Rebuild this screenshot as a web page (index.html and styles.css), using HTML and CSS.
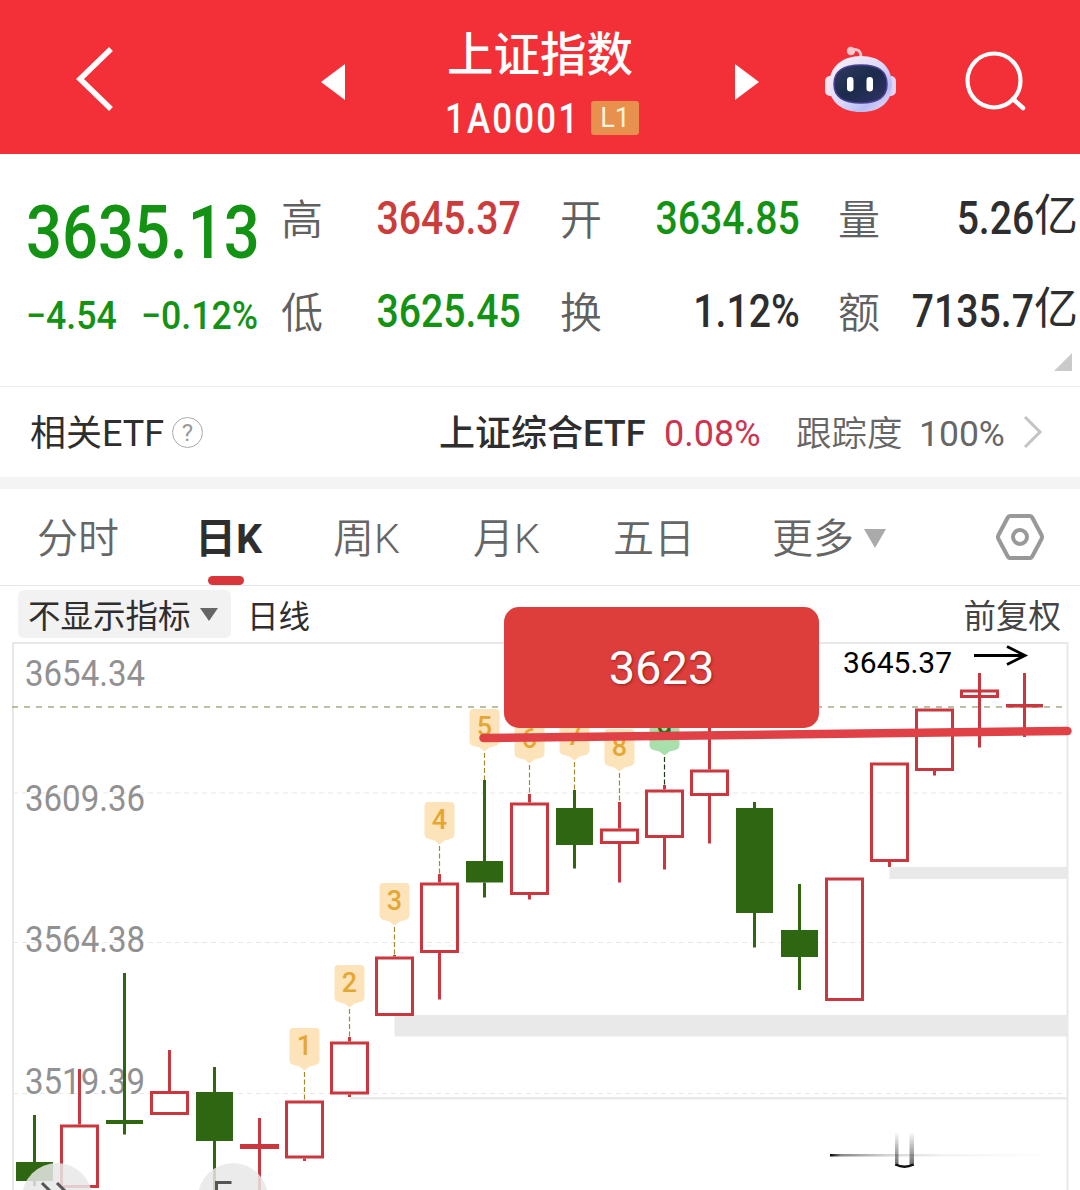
FILE: index.html
```html
<!DOCTYPE html>
<html lang="zh-CN">
  <head>
    <meta charset="UTF-8" />
    <meta name="viewport" content="width=device-width, initial-scale=1.0" />
    <title>上证指数</title>
    <link rel="stylesheet" href="styles.css">
  </head>
  <body>
    <div class="header">
      <svg class="back" width="40" height="68" viewBox="0 0 40 68"><path d="M36 4 L5 34 L36 64" fill="none" stroke="#fff" stroke-width="5.500" /></svg>
      <svg class="prev" width="24" height="36" viewBox="0 0 24 36"><path d="M24 0 L0 18 L24 36 Z" fill="#fff" /></svg>
      <div class="name">
        <div class="title">上证指数</div>
        <div class="code"><span class="code-num">1A0001</span><span class="level">L1</span></div>
      </div>
      <svg class="next" width="24" height="36" viewBox="0 0 24 36"><path d="M0 0 L24 18 L0 36 Z" fill="#fff" /></svg>
      <svg class="robot" width="72" height="68" viewBox="0 0 72 68">
        <defs>
          <linearGradient id="head" x1="0" y1="0" x2="1" y2="1">
            <stop offset="0" stop-color="#fff3f6" />
            <stop offset="0.5" stop-color="#dcd9fa" />
            <stop offset="0.75" stop-color="#b9bdf5" />
            <stop offset="1" stop-color="#f9dff0" />
          </linearGradient>
          <linearGradient id="face" x1="0" y1="0" x2="1" y2="1">
            <stop offset="0" stop-color="#303a61" />
            <stop offset="0.5" stop-color="#1b2b4b" />
            <stop offset="1" stop-color="#303365" />
          </linearGradient>
        </defs>
        <path d="M26 5 C33 3 36 6 36 13" fill="none" stroke="#ffc4cc" stroke-width="3" />
        <circle cx="26" cy="6" r="4.2" fill="#ffc9ce" />
        <rect x="0" y="31" width="12" height="20" rx="5" fill="#fbe3ef" />
        <rect x="60" y="31" width="11" height="20" rx="5" fill="#e3d4f4" />
        <path d="M36 11 C55 11 67 22 67 40 C67 57 55 67 36 67 C17 67 4 57 4 40 C4 22 17 11 36 11 Z" fill="url(#head)" />
        <path d="M36 20 C53 20 62 26 62 39 C62 52 53 58 36 58 C18 58 9 52 9 39 C9 26 18 20 36 20 Z" fill="url(#face)" stroke="#4a3f94" stroke-width="1.5" />
        <rect x="22" y="32" width="6.5" height="14.500" rx="3.200" fill="#fff" />
        <rect x="41.500" y="32" width="6.5" height="14.500" rx="3.200" fill="#fff" />
      </svg>
      <svg class="search" width="64" height="62" viewBox="0 0 64 62">
        <ellipse cx="29" cy="30.500" rx="26.500" ry="27" fill="none" stroke="#fff" stroke-width="4.200" />
        <path d="M48 49 L58 58" stroke="#fff" stroke-width="4.500" stroke-linecap="round" />
      </svg>
    </div>

    <div class="quote">
      <div class="price">
        <div class="now green"><span class="num">3635.13</span></div>
        <div class="change green"><span class="num">−4.54</span><span class="num">−0.12%</span></div>
      </div>
      <div class="grid">
        <span class="label">高</span><span class="val red"><span class="num">3645.37</span></span>
        <span class="label">开</span><span class="val green"><span class="num">3634.85</span></span>
        <span class="label">量</span><span class="val"><span class="num">5.26</span><span class="unit">亿</span></span>
        <span class="label">低</span><span class="val green"><span class="num">3625.45</span></span>
        <span class="label">换</span><span class="val"><span class="num">1.12%</span></span>
        <span class="label">额</span><span class="val"><span class="num">7135.7</span><span class="unit">亿</span></span>
      </div>
      <div class="corner"></div>
    </div>

    <div class="etf">
      <span class="etf-title">相关ETF</span>
      <span class="help">?</span>
      <span class="etf-name">上证综合ETF</span>
      <span class="etf-rate">0.08%</span>
      <span class="track">跟踪度</span>
      <span class="track-num">100%</span>
      <svg class="more" width="20" height="34" viewBox="0 0 20 34"><path d="M2 2 L17 17 L2 32" fill="none" stroke="#c4c4c4" stroke-width="3" /></svg>
    </div>

    <div class="tabs">
      <span class="tab">分时</span>
      <span class="tab active">日K</span>
      <span class="tab">周K</span>
      <span class="tab">月K</span>
      <span class="tab">五日</span>
      <span class="tab">更多<i class="down"></i></span>
      <svg class="setting" width="50" height="48" viewBox="0 0 50 48">
        <path d="M15.500 3 H34.500 Q36.500 3 37.500 5 L46.500 22 Q47.500 24 46.500 26 L37.500 43 Q36.500 45 34.500 45 H15.500 Q13.500 45 12.500 43 L3.500 26 Q2.500 24 3.500 22 L12.500 5 Q13.500 3 15.500 3 Z" fill="none" stroke="#999" stroke-width="4" />
        <circle cx="25" cy="24" r="7" fill="none" stroke="#999" stroke-width="4" />
      </svg>
    </div>

    <div class="tools">
      <span class="select">不显示指标<i class="down small"></i></span>
      <span class="period">日线</span>
      <span class="adjust">前复权</span>
    </div>

    <div class="chart">
      <svg id="kline" width="1080" height="548" viewBox="0 642 1080 548">
        <defs>
          <linearGradient id="fadeLine" x1="0" x2="1">
            <stop offset="0" stop-color="#000" />
            <stop offset="0.05" stop-color="#888" />
            <stop offset="0.25" stop-color="#d4d4d4" />
            <stop offset="0.5" stop-color="#f2f2f2" />
            <stop offset="1" stop-color="#fff" />
          </linearGradient>
          <linearGradient id="fadeUp" x1="0" y1="0" x2="0" y2="1">
            <stop offset="0" stop-color="#333" stop-opacity="0" />
            <stop offset="1" stop-color="#333" stop-opacity="0.75" />
          </linearGradient>
        </defs>
        <g fill="none" stroke="#e8e8e8" stroke-width="2">
          <path d="M13 1190 V643 H1067.500 V1190" />
          <path d="M13 793 H1067 M13 942.500 H1067 M13 1093.500 H1067" stroke-width="1.200" stroke-dasharray="5 4" />
        </g>
        <g class="axis">
          <text x="25" y="686" textLength="120" lengthAdjust="spacingAndGlyphs">3654.34</text>
          <text x="25" y="811" textLength="120" lengthAdjust="spacingAndGlyphs">3609.36</text>
          <text x="25" y="952" textLength="120" lengthAdjust="spacingAndGlyphs">3564.38</text>
          <text x="25" y="1094" textLength="120" lengthAdjust="spacingAndGlyphs">3519.39</text>
        </g>
        <path d="M12 707 H1064" stroke="#a3ad84" stroke-width="1.600" stroke-dasharray="6 6" />
        <g fill="#e9e9e9">
          <rect x="394.500" y="1015" width="673" height="21.500" />
          <rect x="889.500" y="867" width="178" height="12" />
          <rect x="349.500" y="1097" width="718" height="2.500" />
        </g>
        <g id="candles"></g>
        <g id="tags"></g>
        <text class="high" x="843" y="673">3645.37</text>
        <path d="M974 655.500 H1024 M1007 646.500 L1025 655.500 L1007 664.500" fill="none" stroke="#000" stroke-width="2.800" />
        <path d="M483.500 738 L1067.500 731" stroke="#e04147" stroke-width="8.500" stroke-linecap="round" />

        <!-- 滑块 -->
        <rect x="830" y="1154" width="225" height="2.500" fill="url(#fadeLine)" />
        <rect x="895" y="1132" width="3.500" height="34" fill="url(#fadeUp)" />
        <rect x="909.500" y="1132" width="4.500" height="34" fill="url(#fadeUp)" />
        <path d="M895.500 1164.500 Q904.500 1169 913.500 1164.500" fill="none" stroke="#111" stroke-width="2.500" />

        <!-- 底部按钮 -->
        <g fill="#e8e8e8" fill-opacity="0.85">
          <circle cx="57" cy="1198" r="35" />
          <circle cx="233" cy="1198" r="35" />
        </g>
        <g fill="none" stroke="#555" stroke-width="3">
          <path d="M42 1183 L54 1195 M57 1183 L69 1195" />
          <path d="M231.500 1182.500 H216.500 V1192" />
        </g>
      </svg>
      <div class="note">3623</div>
    </div>

    <script>
      // [中心x, 最高, 实体上, 实体下, 最低, 1涨 0跌]
      const data = [
        [34.5, 1115, 1162, 1181, 1186, 0],
        [79.5, 1069, 1124.5, 1188, 1188, 1],
        [124.5, 973, 1120, 1124, 1134.5, 0],
        [169.5, 1050, 1091, 1115, 1115, 1],
        [214.5, 1067, 1092, 1141, 1190, 0],
        [259.5, 1118, 1144, 1149, 1190, 1],
        [304.5, 1100.5, 1100.5, 1158.5, 1161, 1],
        [349.5, 1037, 1041.5, 1094.5, 1097, 1],
        [394.5, 955, 956.5, 1016, 1016, 1],
        [439.5, 874, 882.5, 953, 999.5, 1],
        [484.5, 780, 861, 882.5, 897.5, 0],
        [529.5, 794, 802.5, 895, 899.5, 1],
        [574.5, 790, 808, 845, 868.5, 0],
        [619.5, 802, 828.5, 844, 882.5, 1],
        [664.5, 785, 789.5, 838, 869.5, 1],
        [709.5, 727, 769.5, 796, 843.5, 1],
        [754.5, 802, 808, 913, 947.5, 0],
        [799.5, 884, 930, 957, 990, 0],
        [844.5, 877.5, 877.5, 1001, 1001, 1],
        [889.5, 762.5, 762.5, 862, 867, 1],
        [934.5, 708.5, 708.5, 771, 775.5, 1],
        [979.5, 673, 689.5, 698, 747.5, 1],
        [1024.5, 673, 704, 707.5, 737, 1]
      ];
      let html = '';
      data.forEach(([x, high, top, bottom, low, up]) => {
        const color = up ? '#c9383f' : '#2f6612';
        const wick = (a, b) => (b > a ? `<rect x="${x - 1.5}" y="${a}" width="3" height="${b - a}" fill="${color}" />` : '');
        // 实体很薄时影线直接贯穿
        html += bottom - top < 10 ? wick(high, low) : wick(high, top) + wick(bottom, low);
        if (up && bottom - top > 6) {
          html += `<rect x="${x - 18}" y="${top + 1.5}" width="36" height="${bottom - top - 3}" fill="none" stroke="${color}" stroke-width="3" />`;
        } else {
          const w = bottom - top > 4.5 && up ? 39 : 37;
          html += `<rect x="${x - w / 2}" y="${top}" width="${w}" height="${bottom - top}" fill="${color}" />`;
        }
      });
      document.getElementById('candles').innerHTML = html;

      // 九转序列 [数字, 中心x, 标签顶部, 连线底部]
      const tags = [
        [1, 304.5, 1028, 1100],
        [2, 349.5, 965, 1037],
        [3, 394.5, 883, 955],
        [4, 439.5, 802, 874],
        [5, 484.5, 709, 780],
        [6, 529.5, 721, 794],
        [7, 574.5, 718, 790],
        [8, 619.5, 729, 802],
        [9, 664.5, 713, 785]
      ];
      html = '';
      tags.forEach(([n, x, y, end]) => {
        const last = n === 9;
        html += `<path d="M${x - 11} ${y} h22 q4 0 4 4 v28 q0 4 -4 5 l-6 1.500 l-5 4 l-5 -4 l-6 -1.500 q-4 -1 -4 -5 v-28 q0 -4 4 -4 z" fill="${last ? '#a9dfaa' : '#fde3ba'}" />`;
        html += `<path d="M${x} ${y + 44} V${end}" stroke="${last ? '#1d3d10' : '#a08a30'}" stroke-width="1.2" stroke-dasharray="5 2.5" />`;
        html += `<text class="tag" x="${x}" y="${y + 27}" fill="${last ? '#2f6612' : '#e5a733'}">${n}</text>`;
      });
      document.getElementById('tags').innerHTML = html;
    </script>
  </body>
</html>
```
FILE: styles.css
```css
body {
  margin: 0;
  width: 1080px;
  height: 1190px;
  overflow: hidden;
  background: #fff;
  color: #2e2e2e;
  font-family: Roboto, "Noto Sans CJK SC", sans-serif;
}
svg {
  display: block;
  flex: none;
}
.header {
  display: flex;
  height: 154px;
  background: #f32f38;
  color: #fff;
}
.back {
  margin: 45px 0 0 75px;
}
.prev {
  margin: 64px 0 0 206px;
}
.name {
  width: 194px;
  margin-left: 100px;
  flex: none;
}
.title {
  margin: 22px 0 0 2px;
  font-size: 46.5px;
  line-height: 66px;
  font-weight: 500;
  white-space: nowrap;
}
.code {
  display: flex;
  align-items: center;
  height: 34px;
  margin-top: 13px;
}
.code-num {
  width: 146px;
  margin-top: 2px;
  font-size: 42px;
  font-weight: 500;
  line-height: 34px;
  letter-spacing: 2.6px;
  transform: scaleX(0.83);
  transform-origin: left;
}
.level {
  width: 48px;
  height: 34px;
  border-radius: 3px;
  background: #e8904e;
  color: #fff3d8;
  font-size: 27px;
  line-height: 35px;
  text-align: center;
}
.next {
  margin: 64px 0 0 96px;
}
.robot {
  margin: 45px 0 0 66px;
}
.search {
  margin: 50px 0 0 68px;
}
.quote {
  position: relative;
  display: flex;
  height: 232px;
  border-bottom: 1px solid #ececec;
}
.green {
  color: #149214;
}
.red {
  color: #cb3c3c;
}
.num {
  display: inline-block;
  transform: scaleX(0.86);
  transform-origin: right;
}
.price {
  width: 281px;
  font-weight: 500;
}
.price .num {
  transform: scaleX(0.845);
  transform-origin: left;
}
.now {
  height: 82px;
  margin: 37px 0 0 26px;
  font-size: 75px;
  line-height: 82px;
}
.change {
  display: flex;
  gap: 9px;
  margin: 20px 0 0 26px;
  font-size: 39px;
  line-height: 46px;
}
.change .num {
  transform: scaleX(0.915);
}
.change .num:first-child {
  width: 106px;
}
.grid {
  display: grid;
  grid-template-columns: 42px 198px 81px 198px 80px 198px;
  grid-template-rows: 93px 93px;
  height: 186px;
  margin-top: 18px;
  align-items: center;
}
.label {
  margin-bottom: 5px;
  color: #606060;
  font-size: 42px;
  font-weight: 350;
  text-align: right;
}
.label:nth-child(6n + 1) {
  text-align: left;
}
.val {
  display: flex;
  align-items: center;
  justify-content: flex-end;
  font-size: 45.5px;
  font-weight: 500;
  line-height: 54px;
  white-space: nowrap;
}
.unit {
  margin-top: -6px;
  font-size: 44px;
  font-weight: 400;
}
.corner {
  position: absolute;
  right: 8px;
  bottom: 15px;
  border-left: 18px solid transparent;
  border-bottom: 18px solid #cacaca;
}
.etf {
  display: flex;
  align-items: center;
  height: 90px;
  padding-left: 30px;
  border-bottom: 12px solid #f4f4f4;
  font-size: 36px;
  white-space: nowrap;
}
.etf-title {
  width: 142px;
  margin-bottom: 4px;
}
.help {
  width: 29px;
  height: 29px;
  border: 1.5px solid #aaa;
  border-radius: 50%;
  color: #999;
  font-size: 24px;
  line-height: 30px;
  text-align: center;
}
.etf-name {
  width: 225px;
  margin: 0 0 4px 236px;
  font-weight: 500;
}
.etf-rate {
  width: 132px;
  margin-top: 4px;
  color: #cc3450;
}
.track {
  width: 123px;
  margin-bottom: 4px;
  color: #666;
  font-size: 35.5px;
  font-weight: 350;
}
.track-num {
  width: 104px;
  margin-top: 4px;
  color: #666;
  font-size: 35.5px;
}
.tabs {
  display: flex;
  height: 96px;
  border-bottom: 1px solid #e6e6e6;
  color: #666;
  font-size: 41px;
  line-height: 101px;
  font-weight: 350;
  white-space: nowrap;
}
.tab {
  position: relative;
  width: 140px;
  flex: none;
}
.tab:first-child {
  width: 158px;
  margin-left: 37px;
}
.tab:nth-child(2) {
  width: 138px;
}
.tab:nth-child(5) {
  width: 159px;
}
.tab:nth-child(6) {
  width: 223px;
}
.active {
  color: #2e2e2e;
  font-weight: 700;
}
.active::after {
  content: "";
  position: absolute;
  left: 13px;
  bottom: 0;
  width: 36px;
  height: 9px;
  border-radius: 5px;
  background: #d8363a;
}
.down {
  display: inline-block;
  margin-left: 10px;
  border: 11px solid transparent;
  border-top: 19px solid #aaa;
  border-bottom: 0;
  vertical-align: 5px;
}
.down.small {
  margin-left: 9px;
  border-width: 13px 9px 0;
  border-top-color: #666;
  vertical-align: 7px;
}
.setting {
  margin-top: 24px;
}
.tools {
  display: flex;
  height: 56px;
  box-sizing: border-box;
  padding: 4px 19px 0 18px;
  font-size: 32.5px;
  line-height: 55px;
}
.select {
  width: 203px;
  height: 48px;
  padding-left: 10px;
  border-radius: 6px;
  background: #f2f2f2;
}
.period {
  margin-left: 16px;
  font-size: 31.5px;
}
.adjust {
  margin-left: auto;
  color: #444;
}
.chart {
  position: relative;
}
.axis text {
  font-size: 36.5px;
  fill: #919191;
}
.high {
  font-size: 30px;
  fill: #000;
}
.tag {
  font-size: 27px;
  font-weight: 500;
  text-anchor: middle;
}
/* 支撑位标注 */
.note {
  position: absolute;
  left: 504px;
  top: -35px;
  width: 315px;
  height: 121px;
  border-radius: 15px;
  background: #dd3e3c;
  color: #fff;
  font-size: 47px;
  line-height: 121px;
  text-align: center;
  text-shadow: 1px 1px 3px rgba(80, 0, 0, 0.5);
}
```
